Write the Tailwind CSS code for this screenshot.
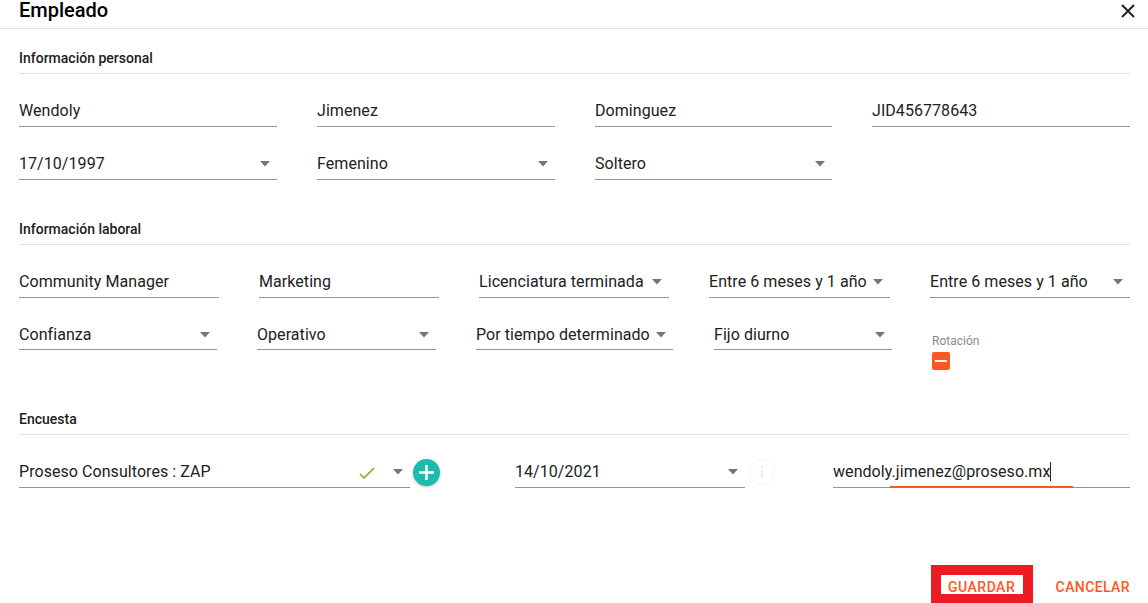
<!DOCTYPE html>
<html lang="es">
<head>
<meta charset="UTF-8">
<title>Empleado</title>
<script src="https://cdn.jsdelivr.net/npm/@tailwindcss/browser@4"></script>
</head>
<body class="bg-white h-[603px] overflow-hidden font-['Roboto',sans-serif] text-[16px] tracking-[0.06px] text-[#212121]">

<header class="h-[29px] border-b border-[#e0e0e0] pl-[19px] pr-[19px] flex justify-between">
  <h1 class="text-[20px] leading-[20px] tracking-normal font-medium text-black">Empleado</h1>
  <svg class="w-[14px] h-[14px] mt-[4px] -mr-[6px]" viewBox="0 0 14 14" fill="none" stroke="#212121" stroke-width="2"><path d="M1 1l12 12M13 1L1 13"/></svg>
</header>

<main class="px-[18px] pl-[19px]">
  <!-- personal -->
  <div class="h-[45px] pt-[21px] border-b border-[#e0e0e0] text-[14px] tracking-normal leading-[16px] font-medium">Información personal</div>
  <div class="flex mt-[21px]">
    <div class="w-[258px] h-8 flex items-center border-b border-[#949494]">Wendoly</div>
    <div class="w-[238px] h-8 ml-[40px] flex items-center border-b border-[#949494]">Jimenez</div>
    <div class="w-[237px] h-8 ml-[40px] flex items-center border-b border-[#949494]">Dominguez</div>
    <div class="w-[258px] h-8 ml-[40px] flex items-center border-b border-[#949494]">JID456778643</div>
  </div>
  <div class="flex mt-[21px]">
    <div class="w-[258px] h-8 flex items-center justify-between pr-[6px] border-b border-[#949494]">17/10/1997
      <svg class="w-[12px] h-[6px]" viewBox="0 0 12 6"><path d="M1 0h10L6 5.500z" fill="#757575"/></svg></div>
    <div class="w-[238px] h-8 ml-[40px] flex items-center justify-between pr-[6px] border-b border-[#949494]">Femenino
      <svg class="w-[12px] h-[6px]" viewBox="0 0 12 6"><path d="M1 0h10L6 5.500z" fill="#757575"/></svg></div>
    <div class="w-[237px] h-8 ml-[40px] flex items-center justify-between pr-[6px] border-b border-[#949494]">Soltero
      <svg class="w-[12px] h-[6px]" viewBox="0 0 12 6"><path d="M1 0h10L6 5.500z" fill="#757575"/></svg></div>
  </div>

  <!-- laboral -->
  <div class="h-[45px] mt-[20px] pt-[21px] border-b border-[#e0e0e0] text-[14px] tracking-normal leading-[16px] font-medium">Información laboral</div>
  <div class="flex mt-[21px]">
    <div class="w-[200px] h-8 flex items-center border-b border-[#949494]">Community Manager</div>
    <div class="w-[180px] h-8 ml-[40px] flex items-center border-b border-[#949494]">Marketing</div>
    <div class="w-[190px] h-8 ml-[40px] flex items-center justify-between pr-[6px] border-b border-[#949494] whitespace-nowrap">Licenciatura terminada
      <svg class="w-[12px] h-[6px]" viewBox="0 0 12 6"><path d="M1 0h10L6 5.500z" fill="#757575"/></svg></div>
    <div class="w-[181px] h-8 ml-[40px] flex items-center justify-between pr-[6px] border-b border-[#949494] whitespace-nowrap">Entre 6 meses y 1 año
      <svg class="w-[12px] h-[6px]" viewBox="0 0 12 6"><path d="M1 0h10L6 5.500z" fill="#757575"/></svg></div>
    <div class="w-[200px] h-8 ml-[40px] flex items-center justify-between pr-[6px] border-b border-[#949494] whitespace-nowrap">Entre 6 meses y 1 año
      <svg class="w-[12px] h-[6px]" viewBox="0 0 12 6"><path d="M1 0h10L6 5.500z" fill="#757575"/></svg></div>
  </div>
  <div class="flex mt-[20px] h-8">
    <div class="w-[198px] h-8 pt-[2px] flex items-center justify-between pr-[6px] border-b border-[#949494]">Confianza
      <svg class="w-[12px] h-[6px]" viewBox="0 0 12 6"><path d="M1 0h10L6 5.500z" fill="#757575"/></svg></div>
    <div class="w-[179px] h-8 pt-[2px] ml-[40px] flex items-center justify-between pr-[6px] border-b border-[#949494]">Operativo
      <svg class="w-[12px] h-[6px]" viewBox="0 0 12 6"><path d="M1 0h10L6 5.500z" fill="#757575"/></svg></div>
    <div class="w-[197px] h-8 pt-[2px] ml-[40px] flex items-center justify-between pr-[6px] border-b border-[#949494] whitespace-nowrap">Por tiempo determinado
      <svg class="w-[12px] h-[6px]" viewBox="0 0 12 6"><path d="M1 0h10L6 5.500z" fill="#757575"/></svg></div>
    <div class="w-[178px] h-8 pt-[2px] ml-[41px] flex items-center justify-between pr-[6px] border-b border-[#949494]">Fijo diurno
      <svg class="w-[12px] h-[6px]" viewBox="0 0 12 6"><path d="M1 0h10L6 5.500z" fill="#757575"/></svg></div>
    <div class="ml-[40px] pt-[16px]">
      <div class="text-[12px] leading-[14px] tracking-normal text-[#8a8a8a]">Rotación</div>
      <div class="w-[18px] h-[18px] mt-[4px] rounded-[2px] bg-[#ff5722] flex items-center justify-center">
        <div class="w-[12px] h-[2px] bg-white"></div>
      </div>
    </div>
  </div>

  <!-- encuesta -->
  <div class="h-[45px] mt-[40px] pt-[21px] border-b border-[#e0e0e0] text-[14px] tracking-normal leading-[16px] font-medium">Encuesta</div>
  <div class="flex mt-[21px]">
    <div class="w-[391px] h-8 flex items-center border-b border-[#949494]">
      <span class="flex-1">Proseso Consultores : ZAP</span>
      <svg class="w-[16px] h-[12px] mr-[17px] mt-[2px]" viewBox="0 0 16 12" fill="none" stroke="#8bc34a" stroke-width="2"><path d="M1 7l4 4L15 1"/></svg>
      <svg class="w-[12px] h-[6px] mr-[6px]" viewBox="0 0 12 6"><path d="M1 0h10L6 5.500z" fill="#757575"/></svg>
    </div>
    <div class="w-[27px] h-[27px] ml-[3px] mt-[3px] rounded-full bg-[#1abcab] shadow-[0_1px_3px_rgba(0,0,0,0.25)] flex items-center justify-center">
      <svg class="w-[15px] h-[15px]" viewBox="0 0 15 15" stroke="#fff" stroke-width="2.500"><path d="M7.500 0v15M0 7.500h15"/></svg>
    </div>
    <div class="w-[230px] h-8 ml-[75px] flex items-center justify-between pr-[6px] border-b border-[#949494]">14/10/2021
      <svg class="w-[12px] h-[6px]" viewBox="0 0 12 6"><path d="M1 0h10L6 5.500z" fill="#757575"/></svg></div>
    <div class="w-[26px] h-[26px] ml-[4px] mt-[3px] rounded-full border border-[#f3f3f3] flex flex-col items-center justify-center gap-[2px]">
      <div class="w-[2px] h-[2px] bg-[#eeeeee]"></div>
      <div class="w-[2px] h-[8px] bg-[#eeeeee]"></div>
    </div>
    <div class="relative w-[297px] h-8 ml-[58px] flex items-center border-b border-[#949494]">
      <span>wendoly.jimenez@proseso.mx</span>
      <span class="w-px h-[19px] bg-[#212121]"></span>
      <div class="absolute left-[57px] -bottom-px w-[183px] h-[2px] bg-[#ff5722]"></div>
    </div>
  </div>

  <!-- acciones -->
  <div class="flex justify-end items-start mt-[77px]">
    <button class="w-[102px] h-[38px] pt-[5px] border-[10px] border-b-[9px] border-[#ed1c24] text-[14px] leading-[14px] font-medium tracking-[0.5px] text-[#ff5722] flex items-center justify-center">GUARDAR</button>
    <button class="ml-[23px] mt-[13px] h-[19px] text-[14px] font-medium tracking-[0.4px] leading-[19px] text-[#ff5722]">CANCELAR</button>
  </div>
</main>
</body>
</html>
